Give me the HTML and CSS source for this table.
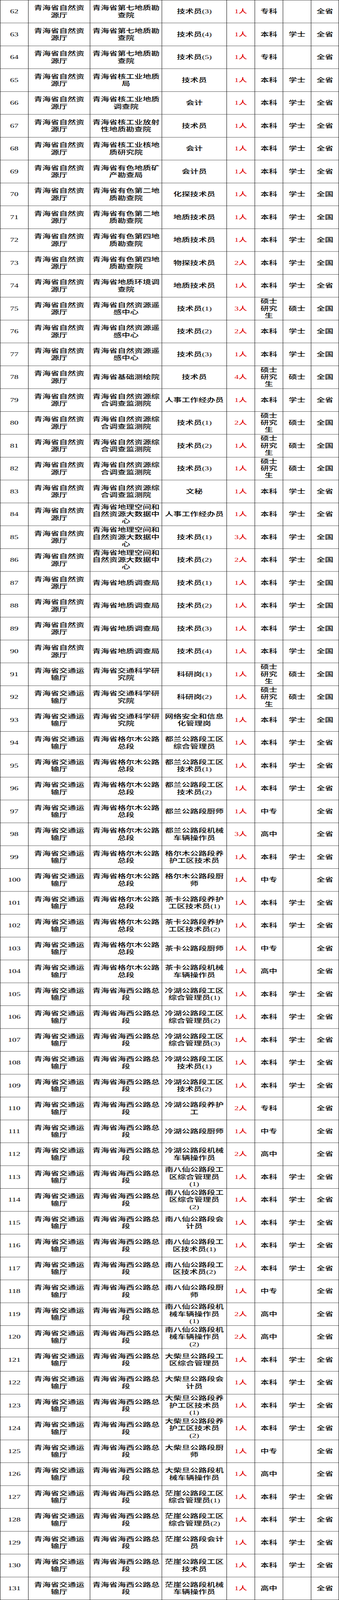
FILE: index.html
```html
<!DOCTYPE html>
<html lang="zh-CN">
<head>
<meta charset="utf-8">
<title>岗位表</title>
<link rel="stylesheet" href="styles.css">
</head>
<body>
<div class="sheet" id="sheet">
<table class="jobs" id="jobs">
<colgroup>
<col class="c-no"><col class="c-dept"><col class="c-unit"><col class="c-post"><col class="c-num"><col class="c-edu"><col class="c-deg"><col class="c-area">
</colgroup>
<tbody>
<tr><td>62</td><td>青海省自然资源厅</td><td>青海省第七地质勘查院</td><td>技术员(3)</td><td class="cnt">1人</td><td>专科</td><td></td><td>全省</td></tr>
<tr><td>63</td><td>青海省自然资源厅</td><td>青海省第七地质勘查院</td><td>技术员(4)</td><td class="cnt">1人</td><td>本科</td><td>学士</td><td>全省</td></tr>
<tr><td>64</td><td>青海省自然资源厅</td><td>青海省第七地质勘查院</td><td>技术员(5)</td><td class="cnt">1人</td><td>专科</td><td></td><td>全省</td></tr>
<tr><td>65</td><td>青海省自然资源厅</td><td>青海省核工业地质局</td><td>技术员</td><td class="cnt">1人</td><td>本科</td><td>学士</td><td>全省</td></tr>
<tr><td>66</td><td>青海省自然资源厅</td><td>青海省核工业地质调查院</td><td>会计</td><td class="cnt">1人</td><td>本科</td><td>学士</td><td>全省</td></tr>
<tr><td>67</td><td>青海省自然资源厅</td><td>青海省核工业放射性地质勘查院</td><td>技术员</td><td class="cnt">1人</td><td>本科</td><td>学士</td><td>全省</td></tr>
<tr><td>68</td><td>青海省自然资源厅</td><td>青海省核工业核地质研究院</td><td>会计</td><td class="cnt">1人</td><td>本科</td><td>学士</td><td>全省</td></tr>
<tr><td>69</td><td>青海省自然资源厅</td><td>青海省有色地质矿产勘查局</td><td>会计员</td><td class="cnt">1人</td><td>本科</td><td>学士</td><td>全省</td></tr>
<tr><td>70</td><td>青海省自然资源厅</td><td>青海省有色第二地质勘查院</td><td>化探技术员</td><td class="cnt">1人</td><td>本科</td><td>学士</td><td>全国</td></tr>
<tr><td>71</td><td>青海省自然资源厅</td><td>青海省有色第二地质勘查院</td><td>地质技术员</td><td class="cnt">1人</td><td>本科</td><td>学士</td><td>全国</td></tr>
<tr><td>72</td><td>青海省自然资源厅</td><td>青海省有色第四地质勘查院</td><td>地质技术员</td><td class="cnt">1人</td><td>本科</td><td>学士</td><td>全国</td></tr>
<tr><td>73</td><td>青海省自然资源厅</td><td>青海省有色第四地质勘查院</td><td>物探技术员</td><td class="cnt">2人</td><td>本科</td><td>学士</td><td>全国</td></tr>
<tr><td>74</td><td>青海省自然资源厅</td><td>青海省地质环境调查院</td><td>地质技术员</td><td class="cnt">1人</td><td>本科</td><td>学士</td><td>全省</td></tr>
<tr><td>75</td><td>青海省自然资源厅</td><td>青海省自然资源遥感中心</td><td>技术员(1)</td><td class="cnt">3人</td><td>硕士研究生</td><td>硕士</td><td>全国</td></tr>
<tr><td>76</td><td>青海省自然资源厅</td><td>青海省自然资源遥感中心</td><td>技术员(2)</td><td class="cnt">2人</td><td>本科</td><td>学士</td><td>全国</td></tr>
<tr><td>77</td><td>青海省自然资源厅</td><td>青海省自然资源遥感中心</td><td>技术员(3)</td><td class="cnt">1人</td><td>本科</td><td>学士</td><td>全国</td></tr>
<tr><td>78</td><td>青海省自然资源厅</td><td>青海省基础测绘院</td><td>技术员</td><td class="cnt">4人</td><td>硕士研究生</td><td>硕士</td><td>全国</td></tr>
<tr><td>79</td><td>青海省自然资源厅</td><td>青海省自然资源综合调查监测院</td><td>人事工作经办员</td><td class="cnt">1人</td><td>本科</td><td>学士</td><td>全省</td></tr>
<tr><td>80</td><td>青海省自然资源厅</td><td>青海省自然资源综合调查监测院</td><td>技术员(1)</td><td class="cnt">2人</td><td>硕士研究生</td><td>硕士</td><td>全国</td></tr>
<tr><td>81</td><td>青海省自然资源厅</td><td>青海省自然资源综合调查监测院</td><td>技术员(2)</td><td class="cnt">1人</td><td>硕士研究生</td><td>硕士</td><td>全国</td></tr>
<tr><td>82</td><td>青海省自然资源厅</td><td>青海省自然资源综合调查监测院</td><td>技术员(3)</td><td class="cnt">1人</td><td>硕士研究生</td><td>硕士</td><td>全国</td></tr>
<tr><td>83</td><td>青海省自然资源厅</td><td>青海省自然资源综合调查监测院</td><td>文秘</td><td class="cnt">1人</td><td>本科</td><td>学士</td><td>全省</td></tr>
<tr><td>84</td><td>青海省自然资源厅</td><td>青海省地理空间和自然资源大数据中心</td><td>人事工作经办员</td><td class="cnt">1人</td><td>本科</td><td>学士</td><td>全省</td></tr>
<tr><td>85</td><td>青海省自然资源厅</td><td>青海省地理空间和自然资源大数据中心</td><td>技术员(1)</td><td class="cnt">3人</td><td>本科</td><td>学士</td><td>全国</td></tr>
<tr><td>86</td><td>青海省自然资源厅</td><td>青海省地理空间和自然资源大数据中心</td><td>技术员(2)</td><td class="cnt">2人</td><td>本科</td><td>学士</td><td>全国</td></tr>
<tr><td>87</td><td>青海省自然资源厅</td><td>青海省地质调查局</td><td>技术员(1)</td><td class="cnt">1人</td><td>本科</td><td>学士</td><td>全国</td></tr>
<tr><td>88</td><td>青海省自然资源厅</td><td>青海省地质调查局</td><td>技术员(2)</td><td class="cnt">1人</td><td>本科</td><td>学士</td><td>全国</td></tr>
<tr><td>89</td><td>青海省自然资源厅</td><td>青海省地质调查局</td><td>技术员(3)</td><td class="cnt">1人</td><td>本科</td><td>学士</td><td>全国</td></tr>
<tr><td>90</td><td>青海省自然资源厅</td><td>青海省地质调查局</td><td>技术员(4)</td><td class="cnt">1人</td><td>本科</td><td>学士</td><td>全国</td></tr>
<tr><td>91</td><td>青海省交通运输厅</td><td>青海省交通科学研究院</td><td>科研岗(1)</td><td class="cnt">1人</td><td>硕士研究生</td><td>硕士</td><td>全国</td></tr>
<tr><td>92</td><td>青海省交通运输厅</td><td>青海省交通科学研究院</td><td>科研岗(2)</td><td class="cnt">1人</td><td>硕士研究生</td><td>硕士</td><td>全国</td></tr>
<tr><td>93</td><td>青海省交通运输厅</td><td>青海省交通科学研究院</td><td>网络安全和信息化管理岗</td><td class="cnt">1人</td><td>本科</td><td>学士</td><td>全国</td></tr>
<tr><td>94</td><td>青海省交通运输厅</td><td>青海省格尔木公路总段</td><td>都兰公路段工区综合管理员</td><td class="cnt">1人</td><td>本科</td><td>学士</td><td>全省</td></tr>
<tr><td>95</td><td>青海省交通运输厅</td><td>青海省格尔木公路总段</td><td>都兰公路段工区技术员(1)</td><td class="cnt">1人</td><td>本科</td><td>学士</td><td>全省</td></tr>
<tr><td>96</td><td>青海省交通运输厅</td><td>青海省格尔木公路总段</td><td>都兰公路段工区技术员(2)</td><td class="cnt">1人</td><td>本科</td><td>学士</td><td>全省</td></tr>
<tr><td>97</td><td>青海省交通运输厅</td><td>青海省格尔木公路总段</td><td>都兰公路段厨师</td><td class="cnt">1人</td><td>中专</td><td></td><td>全省</td></tr>
<tr><td>98</td><td>青海省交通运输厅</td><td>青海省格尔木公路总段</td><td>都兰公路段机械车辆操作员</td><td class="cnt">3人</td><td>高中</td><td></td><td>全省</td></tr>
<tr><td>99</td><td>青海省交通运输厅</td><td>青海省格尔木公路总段</td><td>格尔木公路段养护工区技术员</td><td class="cnt">1人</td><td>本科</td><td>学士</td><td>全省</td></tr>
<tr><td>100</td><td>青海省交通运输厅</td><td>青海省格尔木公路总段</td><td>格尔木公路段厨师</td><td class="cnt">1人</td><td>中专</td><td></td><td>全省</td></tr>
<tr><td>101</td><td>青海省交通运输厅</td><td>青海省格尔木公路总段</td><td>茶卡公路段养护工区技术员(1)</td><td class="cnt">1人</td><td>本科</td><td>学士</td><td>全省</td></tr>
<tr><td>102</td><td>青海省交通运输厅</td><td>青海省格尔木公路总段</td><td>茶卡公路段养护工区技术员(2)</td><td class="cnt">1人</td><td>本科</td><td>学士</td><td>全省</td></tr>
<tr><td>103</td><td>青海省交通运输厅</td><td>青海省格尔木公路总段</td><td>茶卡公路段厨师</td><td class="cnt">1人</td><td>中专</td><td></td><td>全省</td></tr>
<tr><td>104</td><td>青海省交通运输厅</td><td>青海省格尔木公路总段</td><td>茶卡公路段机械车辆操作员</td><td class="cnt">1人</td><td>高中</td><td></td><td>全省</td></tr>
<tr><td>105</td><td>青海省交通运输厅</td><td>青海省海西公路总段</td><td>冷湖公路段工区综合管理员(1)</td><td class="cnt">1人</td><td>本科</td><td>学士</td><td>全省</td></tr>
<tr><td>106</td><td>青海省交通运输厅</td><td>青海省海西公路总段</td><td>冷湖公路段工区综合管理员(2)</td><td class="cnt">1人</td><td>本科</td><td>学士</td><td>全省</td></tr>
<tr><td>107</td><td>青海省交通运输厅</td><td>青海省海西公路总段</td><td>冷湖公路段工区综合管理员(3)</td><td class="cnt">1人</td><td>本科</td><td>学士</td><td>全省</td></tr>
<tr><td>108</td><td>青海省交通运输厅</td><td>青海省海西公路总段</td><td>冷湖公路段工区技术员(1)</td><td class="cnt">1人</td><td>本科</td><td>学士</td><td>全省</td></tr>
<tr><td>109</td><td>青海省交通运输厅</td><td>青海省海西公路总段</td><td>冷湖公路段工区技术员(2)</td><td class="cnt">1人</td><td>本科</td><td>学士</td><td>全省</td></tr>
<tr><td>110</td><td>青海省交通运输厅</td><td>青海省海西公路总段</td><td>冷湖公路段养护工</td><td class="cnt">2人</td><td>专科</td><td></td><td>全省</td></tr>
<tr><td>111</td><td>青海省交通运输厅</td><td>青海省海西公路总段</td><td>冷湖公路段厨师</td><td class="cnt">1人</td><td>中专</td><td></td><td>全省</td></tr>
<tr><td>112</td><td>青海省交通运输厅</td><td>青海省海西公路总段</td><td>冷湖公路段机械车辆操作员</td><td class="cnt">2人</td><td>高中</td><td></td><td>全省</td></tr>
<tr><td>113</td><td>青海省交通运输厅</td><td>青海省海西公路总段</td><td>南八仙公路段工区综合管理员<br>(1)</td><td class="cnt">1人</td><td>本科</td><td>学士</td><td>全省</td></tr>
<tr><td>114</td><td>青海省交通运输厅</td><td>青海省海西公路总段</td><td>南八仙公路段工区综合管理员<br>(2)</td><td class="cnt">1人</td><td>本科</td><td>学士</td><td>全省</td></tr>
<tr><td>115</td><td>青海省交通运输厅</td><td>青海省海西公路总段</td><td>南八仙公路段会计员</td><td class="cnt">1人</td><td>本科</td><td>学士</td><td>全省</td></tr>
<tr><td>116</td><td>青海省交通运输厅</td><td>青海省海西公路总段</td><td>南八仙公路段工区技术员(1)</td><td class="cnt">1人</td><td>本科</td><td>学士</td><td>全省</td></tr>
<tr><td>117</td><td>青海省交通运输厅</td><td>青海省海西公路总段</td><td>南八仙公路段工区技术员(2)</td><td class="cnt">2人</td><td>本科</td><td>学士</td><td>全省</td></tr>
<tr><td>118</td><td>青海省交通运输厅</td><td>青海省海西公路总段</td><td>南八仙公路段厨师</td><td class="cnt">1人</td><td>中专</td><td></td><td>全省</td></tr>
<tr><td>119</td><td>青海省交通运输厅</td><td>青海省海西公路总段</td><td>南八仙公路段机械车辆操作员<br>(1)</td><td class="cnt">2人</td><td>高中</td><td></td><td>全省</td></tr>
<tr><td>120</td><td>青海省交通运输厅</td><td>青海省海西公路总段</td><td>南八仙公路段机械车辆操作员<br>(2)</td><td class="cnt">2人</td><td>高中</td><td></td><td>全省</td></tr>
<tr><td>121</td><td>青海省交通运输厅</td><td>青海省海西公路总段</td><td>大柴旦公路段工区综合管理员</td><td class="cnt">1人</td><td>本科</td><td>学士</td><td>全省</td></tr>
<tr><td>122</td><td>青海省交通运输厅</td><td>青海省海西公路总段</td><td>大柴旦公路段会计员</td><td class="cnt">1人</td><td>本科</td><td>学士</td><td>全省</td></tr>
<tr><td>123</td><td>青海省交通运输厅</td><td>青海省海西公路总段</td><td>大柴旦公路段养护工区技术员<br>(1)</td><td class="cnt">1人</td><td>本科</td><td>学士</td><td>全省</td></tr>
<tr><td>124</td><td>青海省交通运输厅</td><td>青海省海西公路总段</td><td>大柴旦公路段养护工区技术员<br>(2)</td><td class="cnt">1人</td><td>本科</td><td>学士</td><td>全省</td></tr>
<tr><td>125</td><td>青海省交通运输厅</td><td>青海省海西公路总段</td><td>大柴旦公路段厨师</td><td class="cnt">1人</td><td>中专</td><td></td><td>全省</td></tr>
<tr><td>126</td><td>青海省交通运输厅</td><td>青海省海西公路总段</td><td>大柴旦公路段机械车辆操作员</td><td class="cnt">1人</td><td>高中</td><td></td><td>全省</td></tr>
<tr><td>127</td><td>青海省交通运输厅</td><td>青海省海西公路总段</td><td>茫崖公路段工区综合管理员(1)</td><td class="cnt">1人</td><td>本科</td><td>学士</td><td>全省</td></tr>
<tr><td>128</td><td>青海省交通运输厅</td><td>青海省海西公路总段</td><td>茫崖公路段工区综合管理员(2)</td><td class="cnt">1人</td><td>本科</td><td>学士</td><td>全省</td></tr>
<tr><td>129</td><td>青海省交通运输厅</td><td>青海省海西公路总段</td><td>茫崖公路段会计员</td><td class="cnt">1人</td><td>本科</td><td>学士</td><td>全省</td></tr>
<tr><td>130</td><td>青海省交通运输厅</td><td>青海省海西公路总段</td><td>茫崖公路段工区技术员</td><td class="cnt">1人</td><td>本科</td><td>学士</td><td>全省</td></tr>
<tr><td>131</td><td>青海省交通运输厅</td><td>青海省海西公路总段</td><td>茫崖公路段机械车辆操作员</td><td class="cnt">1人</td><td>高中</td><td></td><td>全省</td></tr>
</tbody>
</table>
</div>
<script src="fit.js"></script>
</body>
</html>
```
FILE: styles.css
```css
html, body {
  margin: 0;
  padding: 0;
  background: #fff;
}

/* The sheet is squeezed to the window height when the window is shorter
   than the table (the factor --fit is set by fit.js; 1 = natural size). */
.sheet {
  overflow: hidden;
}

.jobs {
  border-collapse: collapse;
  table-layout: fixed;
  width: 867px;
  font-family: "Liberation Serif", "Noto Sans CJK SC", serif;
  font-size: 21.5px;
  font-weight: 500;
  line-height: 27px;
  color: #000;
  transform-origin: 0 0;
  transform: scaleY(var(--fit, 1));
}

.c-no   { width: 72px; }
.c-dept { width: 158px; }
.c-unit { width: 184px; }
.c-post { width: 166px; }
.c-num  { width: 72px; }
.c-edu  { width: 72px; }
.c-deg  { width: 72px; }
.c-area { width: 71px; }

.jobs td {
  height: 85px;
  padding: 0 4px;
  border: 1px solid #000;
  text-align: center;
  vertical-align: middle;
}

.jobs .cnt {
  color: #e00000;
}
```
FILE: fit.js
```js
(function () {
  var sheet = document.getElementById('sheet');
  var table = document.getElementById('jobs');
  function fit() {
    var h = table.offsetHeight;
    var f = Math.min(1, window.innerHeight / h);
    sheet.style.setProperty('--fit', f);
    sheet.style.height = (h * f) + 'px';
  }
  fit();
  window.addEventListener('resize', fit);
})();
```
